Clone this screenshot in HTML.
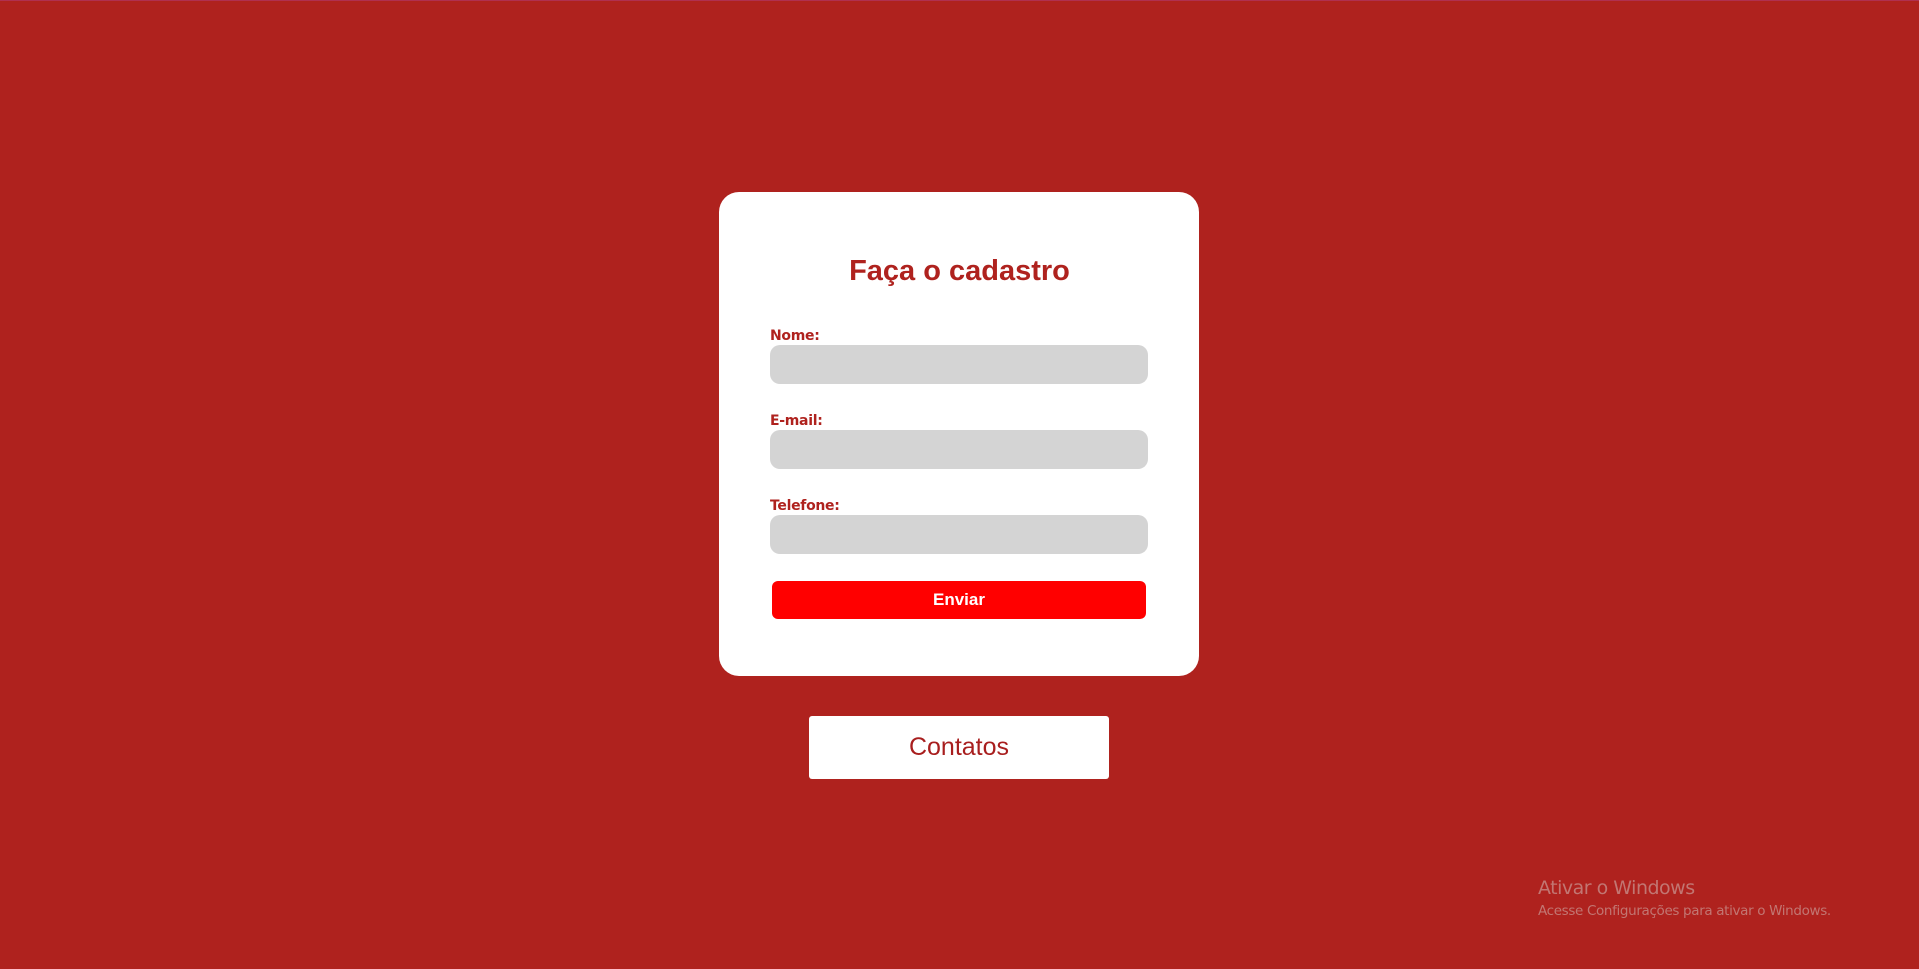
<!DOCTYPE html>
<html><head><meta charset="utf-8"><style>
html,body{margin:0;padding:0;width:1919px;height:969px;background:#af221e;overflow:hidden;font-family:"Liberation Sans",Arial,sans-serif;}
body{position:relative}
.top{position:absolute;left:0;top:0;width:1919px;height:1px;background:#b03050}
.card{position:absolute;left:719px;top:192px;width:480px;height:484px;background:#fff;border-radius:20px;}
h1{position:absolute;left:0;width:100%;top:255px;margin:0;text-align:center;color:#af221e;font-size:29px;font-weight:bold;font-family:"Liberation Sans",sans-serif;}
.lbl{position:absolute;left:770px;color:#af221e;font-weight:bold;font-size:14px;font-family:"DejaVu Sans","Liberation Sans",sans-serif;letter-spacing:-0.3px}
.inp{position:absolute;left:770px;width:378px;height:39px;background:#d4d4d4;border-radius:10px}
.btn{position:absolute;left:772px;top:581px;width:374px;height:38px;background:#ff0000;border-radius:6px;color:#fff;font-weight:bold;font-size:17px;text-align:center;line-height:37px}
.ct{position:absolute;left:809px;top:716px;width:300px;height:63px;background:#fff;border-radius:3px;color:#a81e1e;font-size:25px;text-align:center;line-height:63px}
.w1{position:absolute;left:1538px;top:877px;color:#c27672;font-size:19px;font-family:"DejaVu Sans","Liberation Sans",sans-serif;letter-spacing:-0.5px}
.w2{position:absolute;left:1538px;top:903px;color:#c27672;font-size:13.5px;font-family:"DejaVu Sans","Liberation Sans",sans-serif;letter-spacing:-0.35px}
</style></head><body>
<div class="top"></div>
<div class="card"></div>
<h1>Faça o cadastro</h1>
<div class="lbl" style="top:328px">Nome:</div>
<div class="inp" style="top:345px"></div>
<div class="lbl" style="top:413px">E-mail:</div>
<div class="inp" style="top:430px"></div>
<div class="lbl" style="top:498px">Telefone:</div>
<div class="inp" style="top:515px"></div>
<div class="btn">Enviar</div>
<div class="ct">Contatos</div>
<div class="w1">Ativar o Windows</div>
<div class="w2">Acesse Configurações para ativar o Windows.</div>
</body></html>
